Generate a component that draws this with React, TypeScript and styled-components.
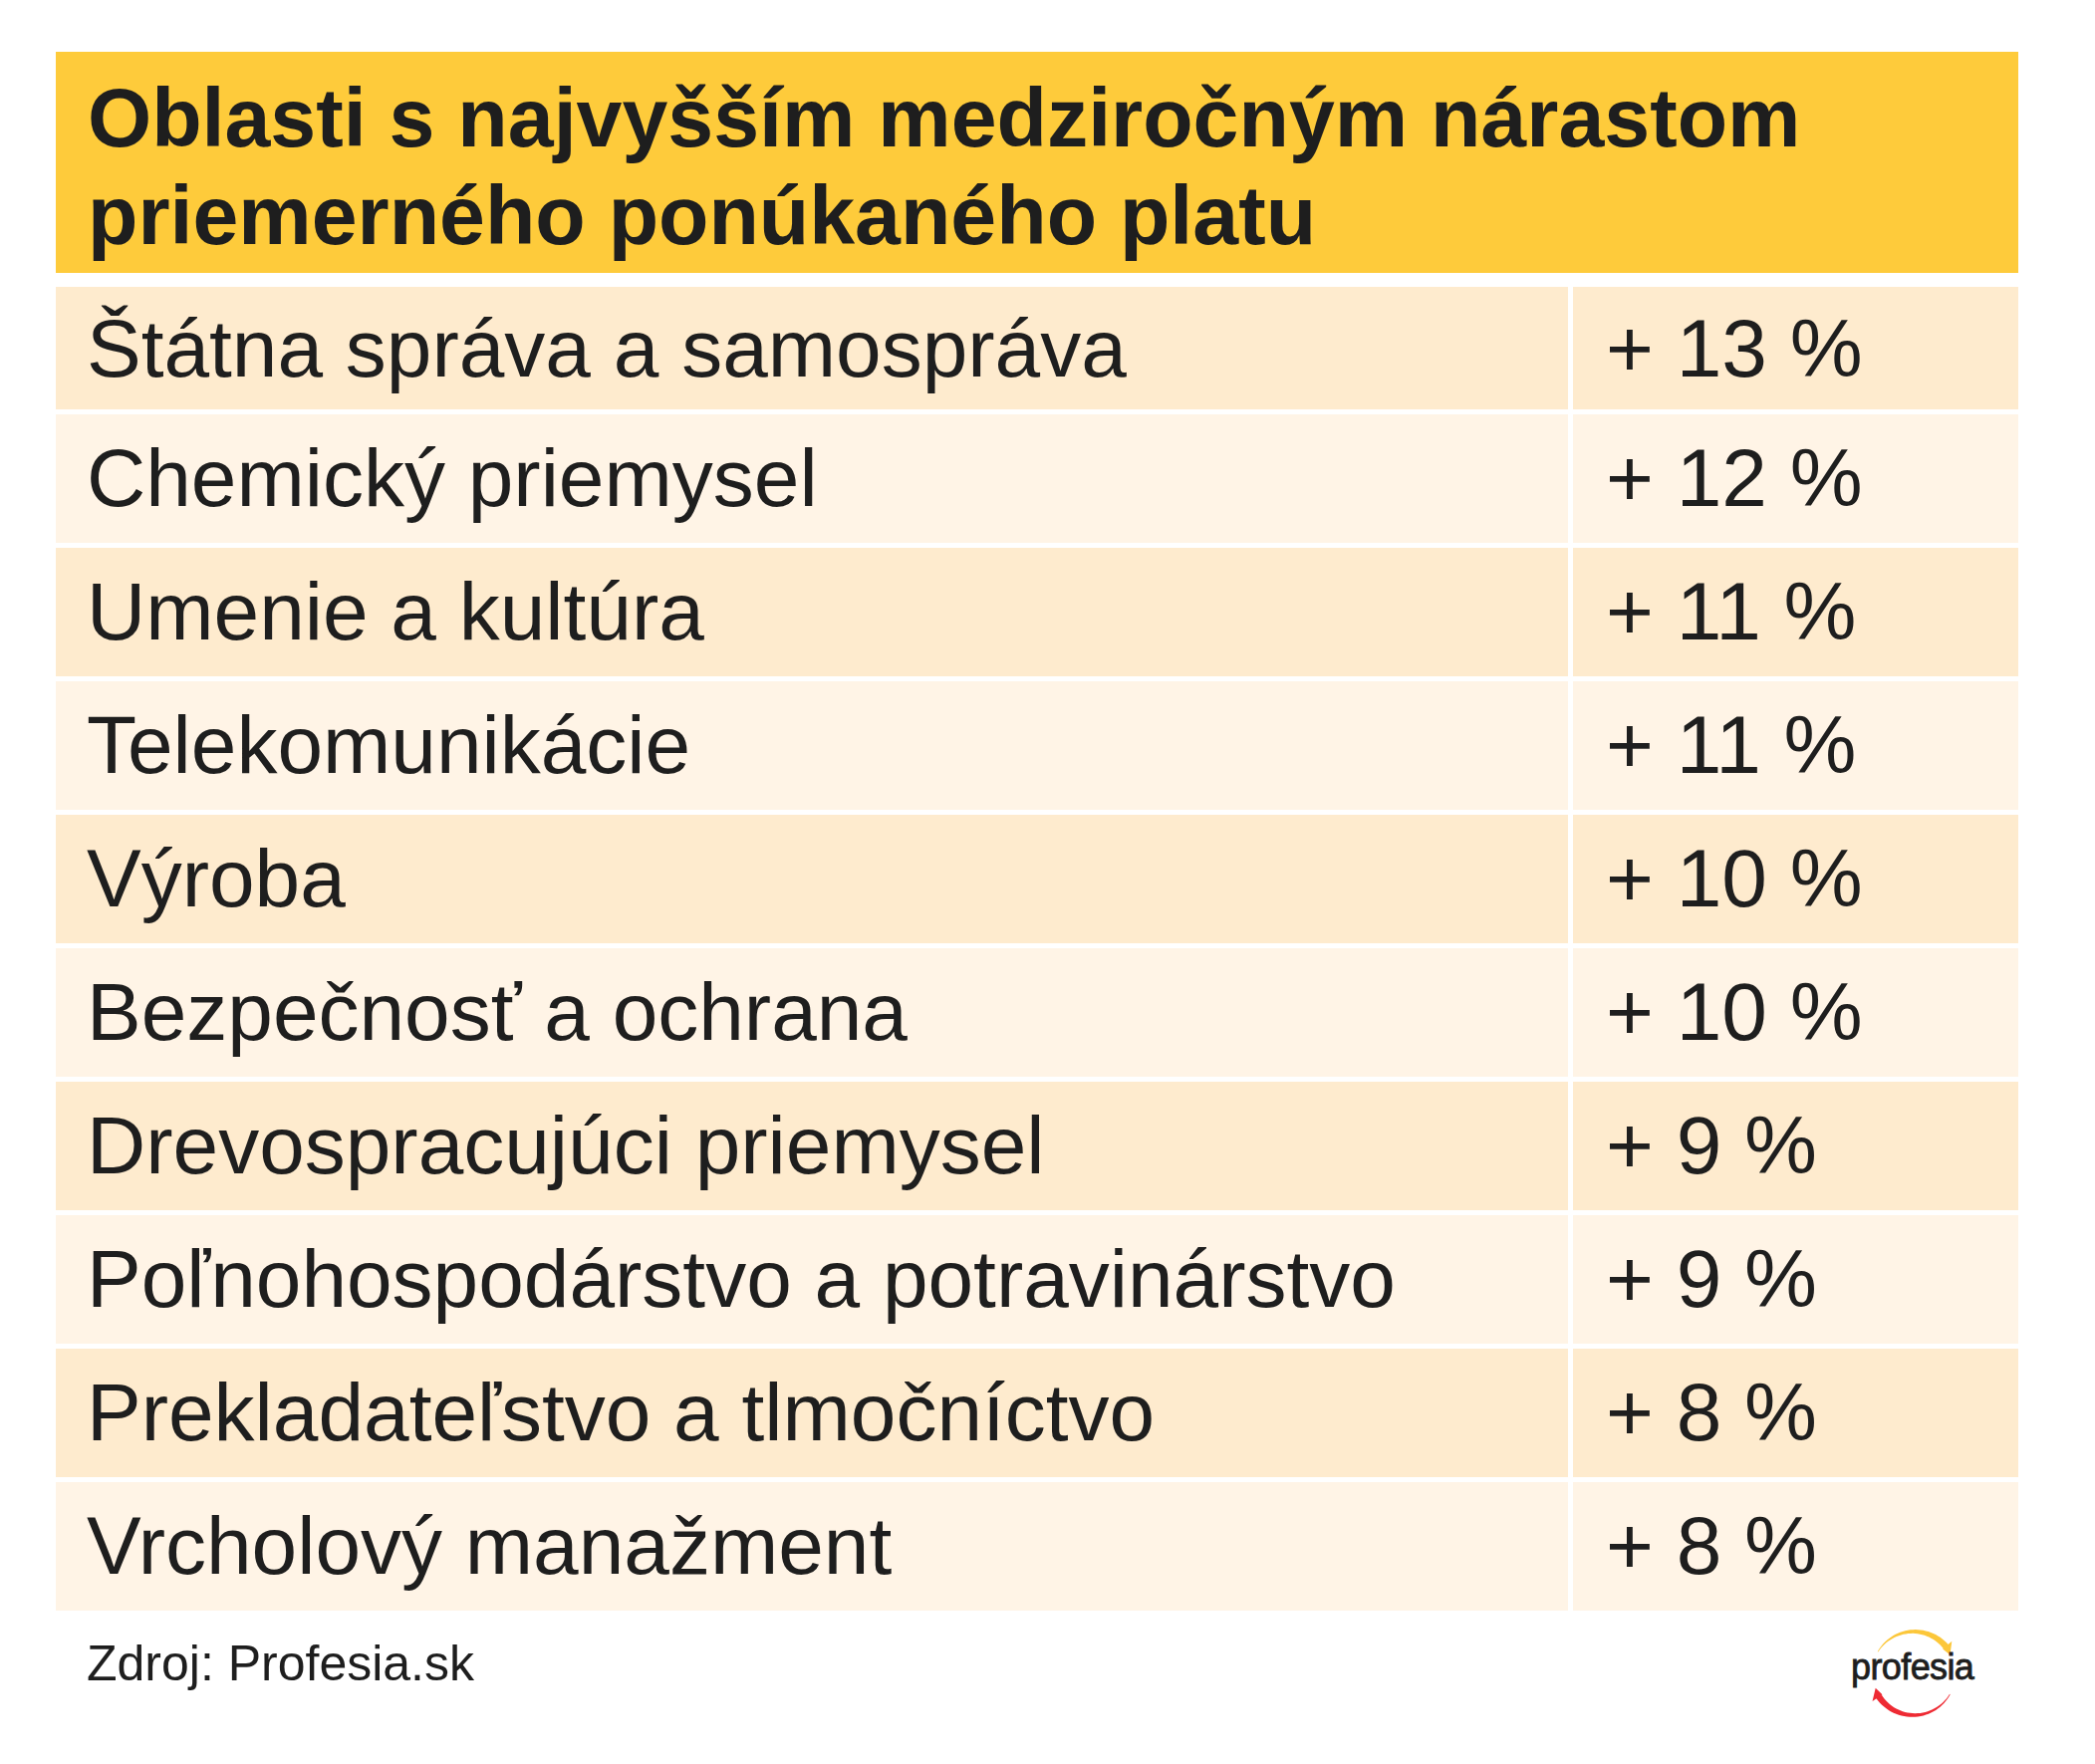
import { Fragment } from "react";
import { styled, createGlobalStyle } from "styled-components";

const GlobalStyle = createGlobalStyle`
  html, body {
    margin: 0;
    padding: 0;
    background: #ffffff;
  }
  body {
    font-family: "Liberation Sans", Arial, sans-serif;
    color: #1e1e1e;
  }
`;

const Page = styled.div`
  width: 1970px;
  padding: 52px 0 0 56px;
`;

const Header = styled.div`
  background-color: #fecb3b;
  height: 222px;
  box-sizing: border-box;
  padding: 17px 32px 0;
`;

const Title = styled.h1`
  margin: 0;
  font-family: "Liberation Sans", Arial, sans-serif;
  font-weight: 700;
  font-size: 82.5px;
  line-height: 98px;
  color: #1e1e1e;
`;

const Table = styled.div`
  display: grid;
  grid-template-columns: 1518px 1fr;
  grid-auto-rows: 129.3px;
  grid-template-rows: 123px;
  column-gap: 5px;
  row-gap: 4.7px;
  margin-top: 14px;
`;

const Cell = styled.div<{ $odd: boolean; $value?: boolean }>`
  display: flex;
  align-items: center;
  box-sizing: border-box;
  padding-left: ${(p) => (p.$value ? "33px" : "31px")};
  background-color: ${(p) => (p.$odd ? "#feebce" : "#fff4e6")};
  font-size: 82px;
  line-height: 1;
  white-space: nowrap;
  color: #1e1e1e;
`;

const Footer = styled.div`
  display: flex;
  justify-content: space-between;
  align-items: flex-start;
  margin-top: 14px;
  padding: 0 40px 0 31px;
`;

const Source = styled.div`
  margin-top: 14px;
  font-size: 50px;
  line-height: 50px;
  color: #1e1e1e;
`;

const Logo = styled.div`
  position: relative;
  width: 128px;
  height: 98px;
  box-sizing: border-box;
  padding-top: 25.5px;
`;

const LogoRing = styled.svg`
  position: absolute;
  left: 14px;
  top: 0;
  width: 98px;
  height: 98px;
`;

const LogoText = styled.span`
  position: relative;
  display: block;
  font-size: 36px;
  line-height: 36px;
  letter-spacing: -0.6px;
  color: #1e1e1e;
  -webkit-text-stroke: 0.8px #1e1e1e;
`;

const rows: [string, string][] = [
  ["Štátna správa a samospráva", "+ 13 %"],
  ["Chemický priemysel", "+ 12 %"],
  ["Umenie a kultúra", "+ 11 %"],
  ["Telekomunikácie", "+ 11 %"],
  ["Výroba", "+ 10 %"],
  ["Bezpečnosť a ochrana", "+ 10 %"],
  ["Drevospracujúci priemysel", "+ 9 %"],
  ["Poľnohospodárstvo a potravinárstvo", "+ 9 %"],
  ["Prekladateľstvo a tlmočníctvo", "+ 8 %"],
  ["Vrcholový manažment", "+ 8 %"],
];

// tapered arc with an arrow head at its end (angles in degrees, clockwise)
const arrowArc = (
  cx: number,
  cy: number,
  r: number,
  a0: number,
  a1: number,
  w0: number,
  w1: number
) => {
  const n = 32;
  const outer: string[] = [];
  const inner: string[] = [];
  for (let i = 0; i <= n; i++) {
    const t = i / n;
    const a = ((a0 + (a1 - a0) * t) * Math.PI) / 180;
    const w = w0 + (w1 - w0) * t;
    outer.push(`${cx + (r + w / 2) * Math.cos(a)},${cy + (r + w / 2) * Math.sin(a)}`);
    inner.push(`${cx + (r - w / 2) * Math.cos(a)},${cy + (r - w / 2) * Math.sin(a)}`);
  }
  const arc = `M${outer.join(" L")} L${inner.reverse().join(" L")} Z`;
  const b = (a1 * Math.PI) / 180;
  const tip = ((a1 + 13) * Math.PI) / 180;
  const head = `M${cx + (r - 4) * Math.cos(b)},${cy + (r - 4) * Math.sin(b)} L${
    cx + (r + 8) * Math.cos(b)
  },${cy + (r + 8) * Math.sin(b)} L${cx + (r - 1) * Math.cos(tip)},${
    cy + (r - 1) * Math.sin(tip)
  } Z`;
  return arc + " " + head;
};

const App = () => {
  return (
    <>
      <GlobalStyle />
      <Page>
        <Header>
          <Title>
            Oblasti s najvyšším medziročným nárastom
            <br />
            priemerného ponúkaného platu
          </Title>
        </Header>
        <Table>
          {rows.map(([name, value], i) => (
            <Fragment key={name}>
              <Cell $odd={i % 2 === 0}>{name}</Cell>
              <Cell $odd={i % 2 === 0} $value>
                {value}
              </Cell>
            </Fragment>
          ))}
        </Table>
        <Footer>
          <Source>Zdroj: Profesia.sk</Source>
          <Logo>
            <LogoRing viewBox="0 0 98 98">
              <path d={arrowArc(49, 49, 42, 211, 320, 0.6, 6.5)} fill="#fcc73a" />
              <path d={arrowArc(49, 49, 42, 30, 146, 0.6, 6.5)} fill="#ee2a33" />
            </LogoRing>
            <LogoText>profesia</LogoText>
          </Logo>
        </Footer>
      </Page>
    </>
  );
};

export default App;
